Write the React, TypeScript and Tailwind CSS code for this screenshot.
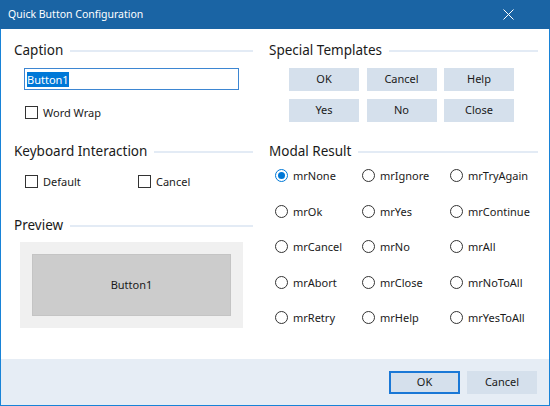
import React from "react";

const font = { fontFamily: '"Noto Sans", "Segoe UI", sans-serif' };

function Header({ title }: { title: string }) {
  return (
    <div className="flex h-[22px] items-center gap-[7px]">
      <span className="text-[13.5px] leading-none text-[#1a1a1a] whitespace-nowrap">{title}</span>
      <div className="h-[2px] flex-1 bg-[#e3ebf5]" />
    </div>
  );
}

function Checkbox({ label }: { label: string }) {
  return (
    <div className="flex h-[13px] items-center gap-[5px]">
      <div className="h-[13px] w-[13px] border border-[#333] bg-white" />
      <span className="text-[11px] leading-none text-[#1a1a1a]">{label}</span>
    </div>
  );
}

function Radio({ label, checked }: { label: string; checked?: boolean }) {
  return (
    <div className="flex h-[13px] items-center gap-[5px]">
      {checked ? (
        <div className="flex h-[13px] w-[13px] items-center justify-center rounded-full border border-[#0078d7] bg-white">
          <div className="h-[7px] w-[7px] rounded-full bg-[#0078d7]" />
        </div>
      ) : (
        <div className="h-[13px] w-[13px] rounded-full border border-[#333] bg-white" />
      )}
      <span className="text-[11px] leading-none text-[#1a1a1a]">{label}</span>
    </div>
  );
}

function TplButton({ label }: { label: string }) {
  return (
    <div className="flex h-[23px] w-[70px] items-center justify-center bg-[#d5e0ec] text-[11px] text-[#1a1a1a]">
      {label}
    </div>
  );
}

const radios = [
  ["mrNone", "mrIgnore", "mrTryAgain"],
  ["mrOk", "mrYes", "mrContinue"],
  ["mrCancel", "mrNo", "mrAll"],
  ["mrAbort", "mrClose", "mrNoToAll"],
  ["mrRetry", "mrHelp", "mrYesToAll"],
];

export default function App() {
  return (
    <div style={font} className="flex h-[406px] w-[550px] flex-col bg-white">
      {/* Title bar */}
      <div className="flex h-[29px] items-center justify-between bg-[#1a64a4] pl-[8px] pr-[36px]">
        <span className="text-[10.5px] text-white">Quick Button Configuration</span>
        <svg width="11" height="11" viewBox="0 0 11 11">
          <path d="M0.5 0.5 L10.5 10.5 M10.5 0.5 L0.5 10.5" stroke="white" strokeWidth="1" />
        </svg>
      </div>
      <div className="flex flex-1 flex-col border-x border-b border-[#1883d7]">
        {/* Body */}
        <div className="flex flex-1 gap-[16px] pl-[13px] pt-[11px]">
          {/* Left column */}
          <div className="flex w-[239px] flex-col">
            <Header title="Caption" />
            <div className="ml-[10px] mt-[6px] flex h-[22px] w-[215px] items-center border border-[#3d86d2] px-[2px]">
              <span className="bg-[#0078d7] text-[11px] leading-[15px] text-white">Button1</span>
            </div>
            <div className="ml-[11px] mt-[16px]">
              <Checkbox label="Word Wrap" />
            </div>
            <div className="mt-[22px]">
              <Header title="Keyboard Interaction" />
            </div>
            <div className="ml-[11px] mt-[12px] flex">
              <div className="w-[113px]">
                <Checkbox label="Default" />
              </div>
              <Checkbox label="Cancel" />
            </div>
            <div className="mt-[27px]">
              <Header title="Preview" />
            </div>
            <div className="ml-[6px] mt-[5px] w-[223px] bg-[#f0f0f0] p-[12px]">
              <div className="flex h-[62px] items-center justify-center border border-[#c4c4c4] bg-[#cccccc] text-[11px] text-[#1a1a1a]">
                Button1
              </div>
            </div>
          </div>
          {/* Right column */}
          <div className="flex w-[269px] flex-col">
            <Header title="Special Templates" />
            <div className="ml-[20px] mt-[6px] grid grid-cols-[70px_70px_70px] gap-x-[7.5px] gap-y-[8px]">
              {["OK", "Cancel", "Help", "Yes", "No", "Close"].map((l) => (
                <TplButton key={l} label={l} />
              ))}
            </div>
            <div className="mt-[19px]">
              <Header title="Modal Result" />
            </div>
            <div className="ml-[6px] mt-[6px] grid grid-cols-[87px_88px_auto] gap-y-[22.5px]">
              {radios.flat().map((l) => (
                <Radio key={l} label={l} checked={l === "mrNone"} />
              ))}
            </div>
          </div>
        </div>
        {/* Footer */}
        <div className="flex h-[46px] items-center justify-end gap-[7px] bg-[#e6edf5] pr-[12px]">
          <div className="flex h-[23px] w-[71px] items-center justify-center border-2 border-[#1a78d6] bg-[#d5e0ec] text-[11px] text-[#1a1a1a]">
            OK
          </div>
          <div className="flex h-[23px] w-[70px] items-center justify-center bg-[#d5e0ec] text-[11px] text-[#1a1a1a]">
            Cancel
          </div>
        </div>
      </div>
    </div>
  );
}
